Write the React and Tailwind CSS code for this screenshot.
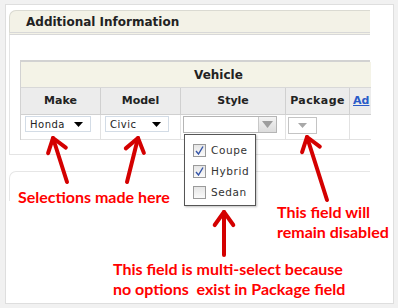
const cols = "grid-cols-[80px_80px_105px_64px_21px]";

const Caret = ({ className }) => (
  <svg width="9" height="5" viewBox="0 0 9 5" className={className}>
    <path d="M0 0 L9 0 L4.5 5 Z" fill="currentColor" />
  </svg>
);

const SelectBox = ({ value, width }) => (
  <div
    className={`flex h-[16px] items-center justify-between border border-[#d3dce6] bg-white pl-[4px] pr-[7px] text-[10px] tracking-[0.5px] text-[#222] ${width}`}
  >
    <span>{value}</span>
    <Caret className="text-black" />
  </div>
);

const Option = ({ label, checked }) => (
  <div className="flex h-[21px] items-center gap-[5px]">
    <div className="flex h-[13px] w-[13px] items-center justify-center border border-[#9a9a9a] bg-gradient-to-b from-[#e6e6e6] to-[#fafafa]">
      {checked && (
        <svg width="9" height="9" viewBox="0 0 9 9">
          <path d="M1 5 L3.5 8 L8 0.5" stroke="#3555a8" strokeWidth="1.4" fill="none" />
        </svg>
      )}
    </div>
    <span className="text-[10.5px] tracking-[0.6px] text-[#333]">{label}</span>
  </div>
);

const Arrow = ({ x1, y1, x2, y2 }) => {
  const a = Math.atan2(y2 - y1, x2 - x1);
  const len = 16;
  const spread = 0.62;
  const p1 = [x2 - len * Math.cos(a - spread), y2 - len * Math.sin(a - spread)];
  const p2 = [x2 - len * Math.cos(a + spread), y2 - len * Math.sin(a + spread)];
  return (
    <g stroke="#d40000" strokeWidth="4" strokeLinecap="round" strokeLinejoin="round" fill="none">
      <line x1={x1} y1={y1} x2={x2} y2={y2} />
      <polyline points={`${p1[0]},${p1[1]} ${x2},${y2} ${p2[0]},${p2[1]}`} />
    </g>
  );
};

export default function App() {
  return (
    <div className="relative h-[308px] w-[398px] overflow-hidden bg-[#f1f1f1] pl-[5px] pt-[4px] font-['DejaVu_Sans',sans-serif]">
      <div className="h-[300px] w-[389px] border border-[#dedede] bg-white pl-[3px] pt-[5px]">
        <div className="w-[361px]">
          <div className="flex h-[25px] items-center rounded-tl-[7px] border-l border-t border-b-[3px] border-[#dadad2] border-b-[#d8d8d8] border-double bg-[#f3f2e7] pl-[16px] text-[12px] font-bold text-[#222]">
            Additional Information
          </div>
          <div className="border-b border-l border-[#e4e4e4] pb-[14px] pl-[10px] pt-[25px]">
            <div className={`grid w-[350px] ${cols} border-l border-t-2 border-[#d2d2d2] text-[#222]`}>
              <div className="col-span-5 flex h-[26px] items-center border-b border-[#d8d8d8] bg-[#f4f3e7] pl-[173px] text-[12px] font-bold">
                Vehicle
              </div>
              {["Make", "Model", "Style", "Package"].map((h) => (
                <div
                  key={h}
                  className={`flex h-[27px] items-center justify-center border-b border-r border-[#d0d0d0] bg-[#ececec] text-[11px] font-bold ${h === "Package" ? "tracking-[0.4px]" : ""}`}
                >
                  {h}
                </div>
              ))}
              <div className="flex h-[27px] items-center overflow-hidden whitespace-nowrap border-b border-[#d0d0d0] bg-[#ececec] pl-[3px] text-[11px] font-bold text-[#2a5bc8] underline">
                Ad
              </div>

              <div className="h-[25px] border-b border-r border-[#e2e2e2] pl-[4px] pt-[1px]">
                <SelectBox value="Honda" width="w-[66px]" />
              </div>
              <div className="h-[25px] border-b border-r border-[#e2e2e2] pl-[4px] pt-[1px]">
                <SelectBox value="Civic" width="w-[64px]" />
              </div>
              <div className="relative h-[25px] border-b border-r border-[#e2e2e2] pl-[2px] pt-[1px]">
                <div className="flex h-[17px] w-[94px] border border-[#b5b5b5] bg-white">
                  <div className="flex-1" />
                  <div className="flex w-[18px] items-center justify-center border-l border-[#c8c8c8] bg-gradient-to-b from-[#f4f4f4] to-[#dcdcdc]">
                    <svg width="11" height="7" viewBox="0 0 11 7">
                      <path d="M0 0 L11 0 L5.5 7 Z" fill="#9d9d9d" />
                    </svg>
                  </div>
                </div>
                <div className="absolute left-[3px] top-[19px] z-10 h-[72px] w-[72px] border border-[#555] bg-white pl-[8px] pt-[5px] shadow-[1px_1px_2px_rgba(0,0,0,0.25)]">
                  <Option label="Coupe" checked />
                  <Option label="Hybrid" checked />
                  <Option label="Sedan" />
                </div>
              </div>
              <div className="h-[25px] border-b border-r border-[#e2e2e2] pl-[2px] pt-[2px]">
                <div className="flex h-[17px] w-[29px] items-center justify-center border border-[#c4c4c4] bg-white">
                  <Caret className="text-[#a8a8a8]" />
                </div>
              </div>
              <div className="h-[25px] border-b border-[#e2e2e2]" />
            </div>
          </div>
          <div className="mt-[16px] h-[30px] rounded-tl-[7px] border-l border-t border-[#e6e6e6]" />
        </div>
      </div>

      <div className="absolute left-[18px] top-[187px] text-[16px] font-bold leading-[20px] text-[#ff0000] font-['Lato',sans-serif]">
        Selections made here
      </div>
      <div className="absolute left-[277px] top-[202px] text-[16px] font-bold leading-[20px] text-[#ff0000] font-['Lato',sans-serif]">
        This field will
        <br />
        remain disabled
      </div>
      <div className="absolute left-[113px] top-[259px] whitespace-pre text-[16px] font-bold leading-[20px] text-[#ff0000] font-['Lato',sans-serif]">
        {"This field is multi-select because\nno options  exist in Package field"}
      </div>

      <svg className="pointer-events-none absolute left-0 top-0" width="398" height="308">
        <Arrow x1={67} y1={182} x2={53} y2={138} />
        <Arrow x1={127} y1={182} x2={138} y2={138} />
        <Arrow x1={224} y1={255} x2={224} y2={212} />
        <Arrow x1={327} y1={200} x2={307} y2={137} />
      </svg>
    </div>
  );
}
